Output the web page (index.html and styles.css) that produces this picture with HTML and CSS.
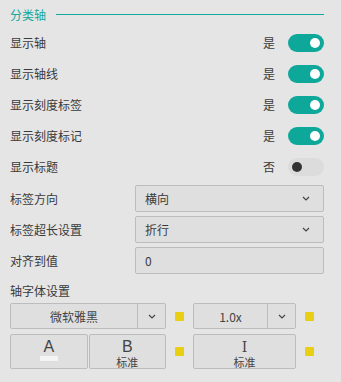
FILE: index.html
```html
<!DOCTYPE html>
<html lang="zh">
<head>
    <meta charset="UTF-8">
    <title>分类轴</title>
    <link rel="stylesheet" href="styles.css">
</head>
<body>
    <div class="panel">
        <div class="section-title">
            <span>分类轴</span>
            <div class="title-line"></div>
        </div>

        <div class="toggle-list">
            <div class="toggle-row">
                <span class="label">显示轴</span>
                <span class="state">是</span>
                <div class="switch on"><div class="knob"></div></div>
            </div>
            <div class="toggle-row">
                <span class="label">显示轴线</span>
                <span class="state">是</span>
                <div class="switch on"><div class="knob"></div></div>
            </div>
            <div class="toggle-row">
                <span class="label">显示刻度标签</span>
                <span class="state">是</span>
                <div class="switch on"><div class="knob"></div></div>
            </div>
            <div class="toggle-row">
                <span class="label">显示刻度标记</span>
                <span class="state">是</span>
                <div class="switch on"><div class="knob"></div></div>
            </div>
            <div class="toggle-row">
                <span class="label">显示标题</span>
                <span class="state">否</span>
                <div class="switch"><div class="knob"></div></div>
            </div>
        </div>

        <div class="field-list">
            <div class="field-row">
                <span class="field-label">标签方向</span>
                <div class="select">
                    <span>横向</span>
                    <svg class="chev" width="8" height="5" viewBox="0 0 8 5"><path d="M1 1l3 3 3-3" fill="none" stroke="#444" stroke-width="1.2"/></svg>
                </div>
            </div>
            <div class="field-row">
                <span class="field-label">标签超长设置</span>
                <div class="select">
                    <span>折行</span>
                    <svg class="chev" width="8" height="5" viewBox="0 0 8 5"><path d="M1 1l3 3 3-3" fill="none" stroke="#444" stroke-width="1.2"/></svg>
                </div>
            </div>
            <div class="field-row">
                <span class="field-label">对齐到值</span>
                <div class="select input">
                    <span>0</span>
                </div>
            </div>
        </div>

        <div class="font-title">轴字体设置</div>

        <div class="font-grid">
            <div class="combo font-family">
                <span class="combo-text">微软雅黑</span>
                <span class="combo-btn">
                    <svg width="8" height="5" viewBox="0 0 8 5"><path d="M1 1l3 3 3-3" fill="none" stroke="#444" stroke-width="1.2"/></svg>
                </span>
            </div>
            <div class="swatch"></div>
            <div class="combo font-size">
                <span class="combo-text">1.0x</span>
                <span class="combo-btn">
                    <svg width="8" height="5" viewBox="0 0 8 5"><path d="M1 1l3 3 3-3" fill="none" stroke="#444" stroke-width="1.2"/></svg>
                </span>
            </div>
            <div class="swatch"></div>

            <div class="btn-pair">
                <div class="style-btn">
                    <span class="big">A</span>
                    <span class="color-bar"></span>
                </div>
                <div class="style-btn">
                    <span class="big">B</span>
                    <span class="small">标准</span>
                </div>
            </div>
            <div class="swatch"></div>
            <div class="style-btn single">
                <span class="big serif">I</span>
                <span class="small">标准</span>
            </div>
            <div class="swatch"></div>
        </div>
    </div>
</body>
</html>
```

FILE: styles.css
```css
body {
    margin: 0;
    padding: 0;
    background-color: #e5e5e5;
    font-family: "Noto Sans CJK SC", "Noto Sans", sans-serif;
    font-size: 12px;
    color: #3a3a3a;
}

.panel {
    width: 314px;
    padding: 4px 17px 0 10px;
}

.section-title {
    display: flex;
    align-items: center;
    height: 20px;
    color: #13a89e;
    font-size: 12px;
}

.title-line {
    flex: 1;
    height: 1px;
    margin-left: 10px;
    background-color: #13a89e;
}

.toggle-list {
    margin-top: 3px;
}

.toggle-row {
    display: flex;
    align-items: center;
    height: 31px;
}

.label {
    flex: 1;
}

.state {
    margin-right: 13px;
}

.switch {
    width: 36px;
    height: 18px;
    border-radius: 9px;
    background-color: #dcdcdc;
    display: flex;
    align-items: center;
    padding: 0 4px;
    box-sizing: border-box;
}

.switch .knob {
    width: 10px;
    height: 10px;
    border-radius: 50%;
    background-color: #333;
}

.switch.on {
    background-color: #0ea89b;
    justify-content: flex-end;
}

.switch.on .knob {
    background-color: #fff;
}

.field-list {
    margin-top: 3px;
}

.field-row {
    display: flex;
    align-items: center;
    height: 27px;
    margin-bottom: 4px;
}

.field-label {
    width: 125px;
}

.select {
    flex: 1;
    height: 27px;
    box-sizing: border-box;
    border: 1px solid #bcbcbc;
    border-radius: 2px;
    background-color: #dfdfdf;
    display: flex;
    align-items: center;
    justify-content: space-between;
    padding: 0 13px 0 9px;
}

.font-title {
    height: 24px;
    line-height: 24px;
    margin-top: 5px;
}

.font-grid {
    display: grid;
    grid-template-columns: 156px 27px 103px 28px;
    grid-template-rows: 26px 35px;
    row-gap: 5px;
    align-items: center;
}

.combo {
    display: flex;
    height: 26px;
    box-sizing: border-box;
    border: 1px solid #bcbcbc;
    border-radius: 2px;
    background-color: #dfdfdf;
}

.combo-text {
    flex: 1;
    display: flex;
    align-items: center;
    justify-content: center;
    color: #444;
}

.combo-btn {
    width: 27px;
    border-left: 1px solid #bcbcbc;
    display: flex;
    align-items: center;
    justify-content: center;
}

.swatch {
    width: 9px;
    height: 9px;
    border-radius: 1px;
    background-color: #e8cf14;
    margin-left: 9px;
}

.btn-pair {
    display: flex;
    gap: 1px;
    height: 35px;
}

.style-btn {
    flex: 1;
    height: 35px;
    box-sizing: border-box;
    border: 1px solid #bcbcbc;
    border-radius: 2px;
    background-color: #dfdfdf;
    display: flex;
    flex-direction: column;
    align-items: center;
    padding-top: 4px;
}

.style-btn .big {
    font-family: "Liberation Sans", sans-serif;
    font-size: 16px;
    line-height: 16px;
    height: 16px;
    color: #444;
}

.style-btn .serif {
    font-family: "DejaVu Serif", serif;
    font-size: 14px;
}

.style-btn .small {
    font-size: 11px;
    line-height: 12px;
    margin-top: 1px;
    color: #444;
}

.color-bar {
    width: 18px;
    height: 5px;
    margin-top: 1px;
    background-color: #f4f4f4;
}
```
